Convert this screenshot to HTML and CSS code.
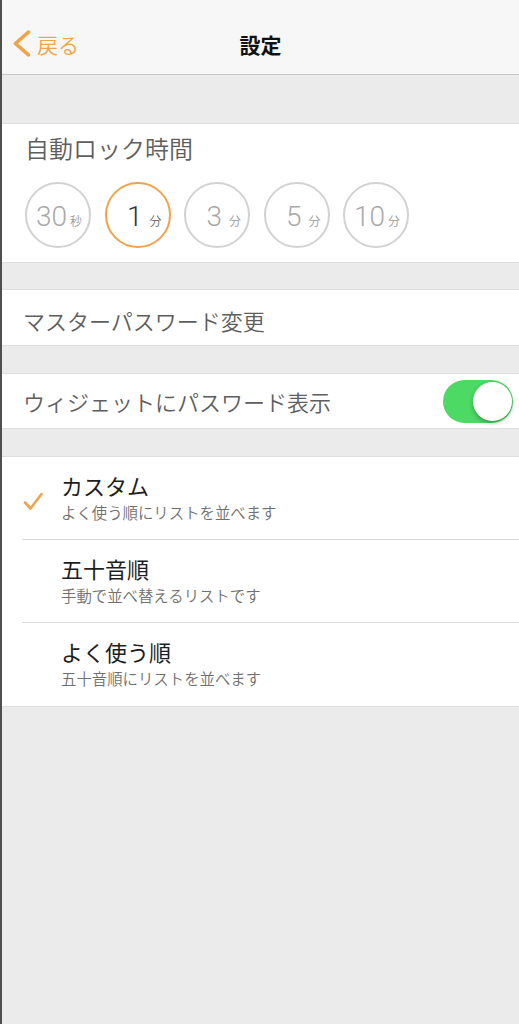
FILE: index.html
```html
<!DOCTYPE html>
<html lang="ja">
<head>
<meta charset="utf-8">
<title>設定</title>
<link rel="stylesheet" href="styles.css">
</head>
<body>
<header class="nav">
  <div class="nav-left">
    <svg class="chevron" width="18" height="27" viewBox="0 0 18 27"><path d="M15.5 2.2 L2.4 13.5 L15.5 24.8" fill="none" stroke="#efa34a" stroke-width="3.6" stroke-linecap="round" stroke-linejoin="round"/></svg>
    <span class="back">戻る</span>
  </div>
  <h1 class="nav-title">設定</h1>
  <div class="nav-right"></div>
</header>

<div class="gap gap-top"></div>

<section class="group lock">
  <div class="lock-title">自動ロック時間</div>
  <div class="lock-options">
    <div class="opt"><span class="num">30</span><span class="unit">秒</span></div>
    <div class="opt opt-on"><span class="num single">1</span><span class="unit">分</span></div>
    <div class="opt"><span class="num single">3</span><span class="unit">分</span></div>
    <div class="opt"><span class="num single">5</span><span class="unit">分</span></div>
    <div class="opt"><span class="num">10</span><span class="unit">分</span></div>
  </div>
</section>

<div class="gap gap-a"></div>

<section class="group">
  <div class="row row-master">マスターパスワード変更</div>
</section>

<div class="gap"></div>

<section class="group">
  <div class="row row-widget">
    <span>ウィジェットにパスワード表示</span>
    <div class="toggle"><div class="knob"></div></div>
  </div>
</section>

<div class="gap"></div>

<section class="group list">
  <div class="item">
    <div class="check-col">
      <svg class="check" width="20" height="19" viewBox="0 0 20 19"><polyline points="2,10.5 7.5,16.5 18.5,2" fill="none" stroke="#efa34a" stroke-width="2.6" stroke-linecap="round" stroke-linejoin="round"/></svg>
    </div>
    <div class="item-text">
      <div class="item-title">カスタム</div>
      <div class="item-sub">よく使う順にリストを並べます</div>
    </div>
  </div>
  <div class="item">
    <div class="check-col"></div>
    <div class="item-text">
      <div class="item-title">五十音順</div>
      <div class="item-sub">手動で並べ替えるリストです</div>
    </div>
  </div>
  <div class="item">
    <div class="check-col"></div>
    <div class="item-text">
      <div class="item-title">よく使う順</div>
      <div class="item-sub">五十音順にリストを並べます</div>
    </div>
  </div>
</section>
</body>
</html>
```

FILE: styles.css
```css
* {
  box-sizing: border-box;
  margin: 0;
  padding: 0;
}

html {
  height: 100%;
}

body {
  width: 519px;
  min-height: 100vh;
  background: #ebebeb;
  border-left: 2px solid #4f4f4f;
  font-family: "Noto Sans CJK JP", "Noto Sans", sans-serif;
  font-weight: 350;
  overflow: hidden;
}

/* nav bar */
.nav {
  height: 75px;
  padding-top: 14px;
  background: #f7f7f7;
  border-bottom: 1px solid #c6c6c6;
  display: grid;
  grid-template-columns: 1fr auto 1fr;
  align-items: center;
}

.nav-left {
  display: flex;
  align-items: center;
  padding-left: 11px;
}

.chevron {
  display: block;
  margin-top: -1px;
}

.back {
  margin-left: 6px;
  font-size: 21px;
  line-height: 1;
  color: #efa34a;
}

.nav-title {
  font-size: 21px;
  font-weight: 700;
  line-height: 1;
  color: #111;
}

/* gaps */
.gap {
  height: 27px;
}

.gap-top {
  height: 48px;
}

.gap-a {
  height: 26px;
}

.group {
  background: #fff;
  border-top: 1px solid #dedede;
  border-bottom: 1px solid #dedede;
}

/* auto lock */
.lock {
  padding: 12px 0 14px 23px;
}

.lock-title {
  font-size: 24px;
  line-height: 24px;
  color: #5e5e5e;
}

.lock-options {
  margin-top: 22px;
  display: flex;
  gap: 13.5px;
}

.opt {
  width: 66px;
  height: 66px;
  border-radius: 50%;
  border: 2px solid #d2d2d2;
  display: flex;
  align-items: baseline;
  padding-top: 19px;
  padding-left: 8px;
}

.opt-on {
  border-color: #efa34a;
}

.num {
  width: 32px;
  text-align: right;
  font-family: "Roboto", "Liberation Sans", sans-serif;
  font-weight: 300;
  font-size: 28px;
  line-height: 28px;
  color: #a9a9a9;
}

.num.single {
  padding-right: 4px;
}

.opt-on .num {
  color: #333;
}

.unit {
  margin-left: 3px;
  font-size: 12px;
  line-height: 12px;
  color: #9a9a9a;
}

.opt-on .unit {
  color: #666;
}

/* rows */
.row {
  display: flex;
  align-items: center;
  justify-content: space-between;
  padding-left: 21px;
  padding-right: 6px;
  font-size: 22px;
  line-height: 1;
  color: #5e5e5e;
}

.row-master {
  height: 55px;
  padding-top: 5px;
}

.row-widget {
  height: 54px;
}

.toggle {
  width: 70px;
  height: 43px;
  border-radius: 22px;
  background: #4cd964;
  display: flex;
  justify-content: flex-end;
  align-items: center;
  padding-right: 1px;
}

.knob {
  width: 39px;
  height: 39px;
  border-radius: 50%;
  background: #fff;
  box-shadow: 0 2px 4px rgba(0, 0, 0, 0.3);
}

/* list */
.item {
  margin-left: 20px;
  height: 83px;
  border-bottom: 1px solid #dcdcdc;
  display: flex;
  align-items: flex-start;
}

.item:last-child {
  border-bottom: none;
}

.check-col {
  width: 39px;
  flex: none;
}

.check {
  display: block;
  margin-top: 35px;
  margin-left: 1px;
}

.item-text {
  padding-top: 17px;
}

.item-title {
  font-size: 22px;
  line-height: 22px;
  font-weight: 400;
  color: #1e1e1e;
}

.item-sub {
  margin-top: 9px;
  font-size: 15.4px;
  line-height: 15px;
  color: #707070;
}
```
